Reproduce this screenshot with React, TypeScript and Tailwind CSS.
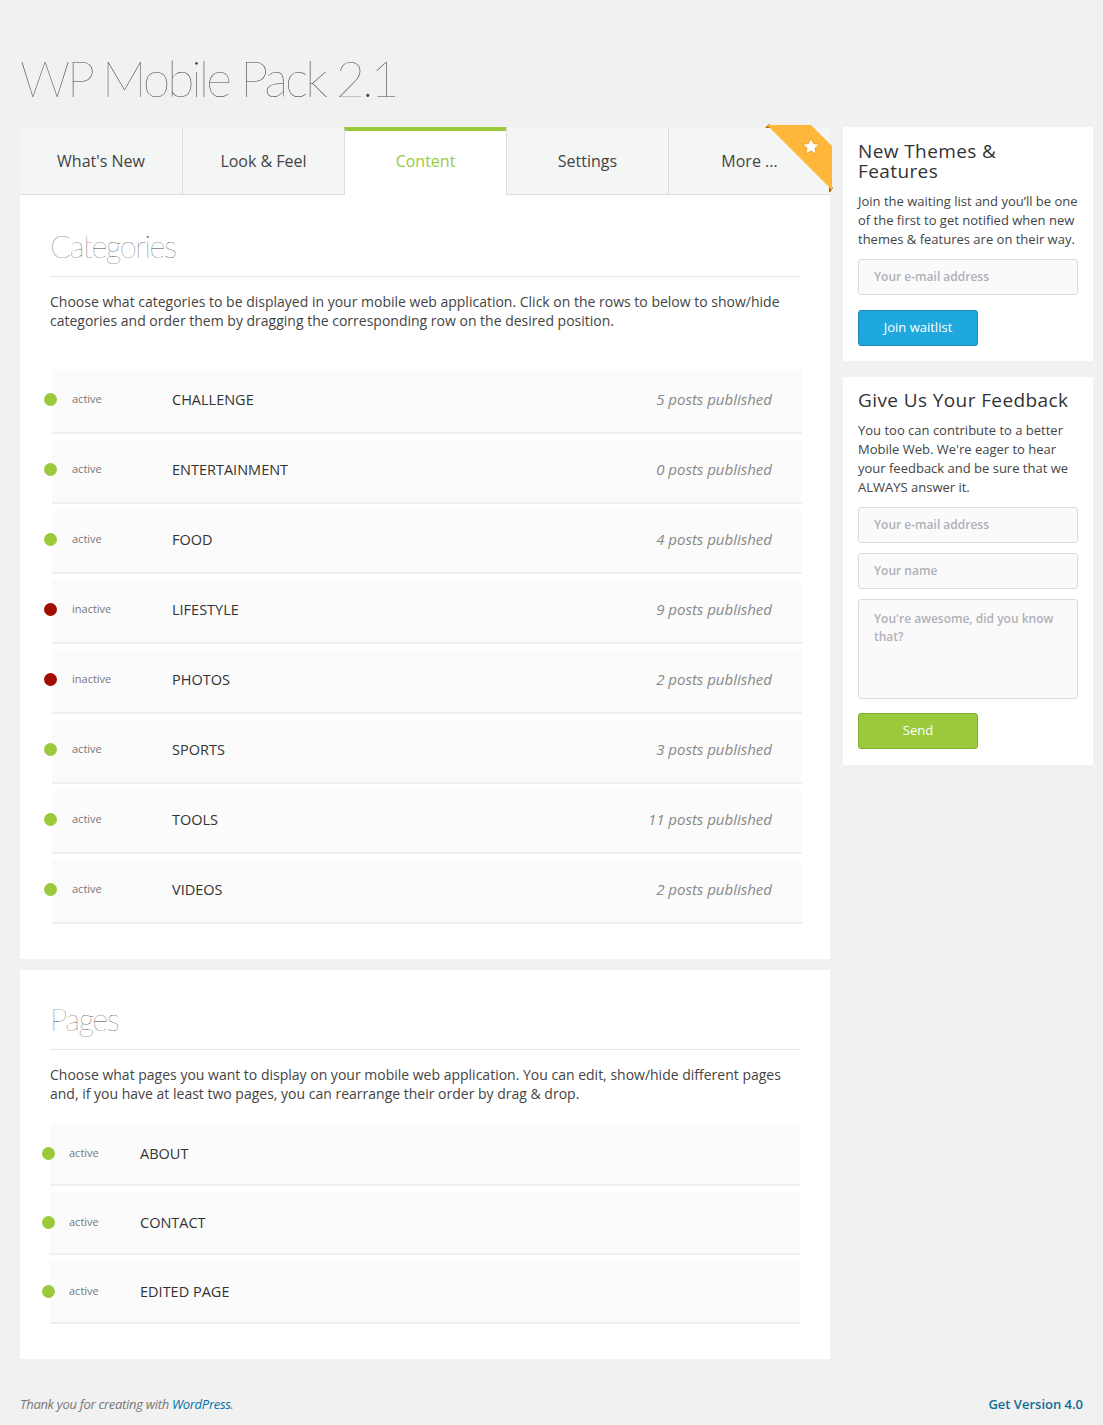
import React from 'react';

const categories = [
    { name: "CHALLENGE", active: true, posts: 5 },
    { name: "ENTERTAINMENT", active: true, posts: 0 },
    { name: "FOOD", active: true, posts: 4 },
    { name: "LIFESTYLE", active: false, posts: 9 },
    { name: "PHOTOS", active: false, posts: 2 },
    { name: "SPORTS", active: true, posts: 3 },
    { name: "TOOLS", active: true, posts: 11 },
    { name: "VIDEOS", active: true, posts: 2 },
];

const pages = ["ABOUT", "CONTACT", "EDITED PAGE"];

const tabs = ["What's New", "Look & Feel", "Content", "Settings", "More ..."];

function Dot({ active }: { active: boolean }) {
    return (
        <span className={`shrink-0 w-[13px] h-[13px] rounded-full -ml-[8px] ${active ? 'bg-[#9aca3c]' : 'bg-[#a30d00]'}`} />
    );
}

function Ribbon() {
    return (
        <svg className="absolute -top-[3px] -right-[3px]" width="68" height="68" viewBox="0 0 68 68">
            <polygon points="0,4 4,0 8,4" fill="#b56b00" />
            <polygon points="64,60 68,64 64,70" fill="#b56b00" />
            <polygon points="2,1 46,1 67,22 67,66" fill="#ffb73b" />
            <polygon
                points="46,14 48.6,19.6 54.6,20.2 50,24.2 51.3,30 46,27 40.7,30 42,24.2 37.4,20.2 43.4,19.6"
                fill="#ffffff"
                stroke="#f0a020"
                strokeWidth="1"
                strokeLinejoin="round"
            />
        </svg>
    );
}

export default function App() {
    return (
        <div className="min-h-[1425px] bg-[#f1f1f1] font-['Open_Sans',sans-serif] text-[#333]">
            <div className="px-[20px] pt-[48px]">
                <h1 className="font-['Lato',sans-serif] font-thin text-[50px] leading-[60px] tracking-[-3px] text-[#444] mb-[19px]">
                    WP Mobile Pack 2.1
                </h1>

                <div className="flex gap-[13px] items-start">
                    {/* Main column */}
                    <div className="w-[810px] shrink-0">
                        <div className="relative grid grid-cols-5 h-[68px]">
                            {tabs.map((tab, i) => (
                                <div
                                    key={tab}
                                    className={`flex items-center justify-center text-[16px] ${i > 0 ? 'border-l border-[#dddddd]' : ''} ${
                                        i === 2
                                            ? 'bg-white border-t-4 border-t-[#9aca3c] text-[#9aca3c] pb-[4px]'
                                            : 'bg-[#f4f5f5] border-b border-b-[#dddddd] text-[#444]'
                                    }`}
                                >
                                    {tab}
                                </div>
                            ))}
                            <Ribbon />
                        </div>

                        {/* Categories */}
                        <div className="bg-white pl-[30px] pr-[30px] pt-[33px] pb-[35px]">
                            <h2 className="font-['Lato',sans-serif] font-thin text-[31px] leading-[36px] tracking-[-1.5px] text-[#444] pb-[12px] border-b border-[#e5e5e5]">
                                Categories
                            </h2>
                            <p className="text-[14px] leading-[19px] text-[#444] mt-[15px] mb-[40px]">
                                Choose what categories to be displayed in your mobile web application. Click on the rows to below to show/hide categories and order them by dragging the corresponding row on the desired position.
                            </p>
                            <div className="ml-[2px] -mr-[2px] flex flex-col gap-[6px]">
                                {categories.map((c) => (
                                    <div key={c.name} className="flex items-center h-[64px] pb-[3px] bg-[#fbfbfb] border-b-2 border-[#efefef]">
                                        <Dot active={c.active} />
                                        <span className="w-[115px] pl-[15px] text-[11px] text-[#777]">{c.active ? 'active' : 'inactive'}</span>
                                        <span className="flex-1 text-[14.5px] text-[#333]">{c.name}</span>
                                        <span className="pr-[30px] text-[15px] italic text-[#888]">{c.posts} posts published</span>
                                    </div>
                                ))}
                            </div>
                        </div>

                        {/* Pages */}
                        <div className="bg-white mt-[11px] pl-[30px] pr-[30px] pt-[31px] pb-[35px]">
                            <h2 className="font-['Lato',sans-serif] font-thin text-[31px] leading-[36px] tracking-[-1.5px] text-[#444] pb-[12px] border-b border-[#e5e5e5]">
                                Pages
                            </h2>
                            <p className="text-[14px] leading-[19px] text-[#444] mt-[15px] mb-[20px]">
                                Choose what pages you want to display on your mobile web application. You can edit, show/hide different pages and, if you have at least two pages, you can rearrange their order by drag &amp; drop.
                            </p>
                            <div className="flex flex-col gap-[6px]">
                                {pages.map((p) => (
                                    <div key={p} className="flex items-center h-[63px] bg-[#fbfbfb] border-b-2 border-[#efefef]">
                                        <Dot active={true} />
                                        <span className="w-[85px] pl-[14px] text-[11px] text-[#777]">active</span>
                                        <span className="text-[14.5px] text-[#333]">{p}</span>
                                    </div>
                                ))}
                            </div>
                        </div>
                    </div>

                    {/* Sidebar */}
                    <div className="w-[250px] shrink-0 flex flex-col gap-[16px]">
                        <div className="bg-white px-[15px] pt-[14px] pb-[15px]">
                            <h3 className="text-[19px] leading-[20px] tracking-[0.4px] text-[#333] w-[160px]">New Themes &amp; Features</h3>
                            <p className="text-[13px] leading-[19px] text-[#444] mt-[11px] mb-[10px]">
                                Join the waiting list and you’ll be one of the first to get notified when new themes &amp; features are on their way.
                            </p>
                            <div className="h-[36px] rounded-[3px] border border-[#dddddd] bg-[#fafafa] flex items-center px-[15px] text-[12px] font-semibold text-[#b0b0b8]">
                                Your e-mail address
                            </div>
                            <button className="mt-[15px] w-[120px] h-[36px] rounded-[3px] bg-[#1fa8dd] border border-[#1889b6] text-white text-[13px]">
                                Join waitlist
                            </button>
                        </div>

                        <div className="bg-white px-[15px] pt-[11px] pb-[16px]">
                            <h3 className="text-[19px] leading-[24px] tracking-[0.4px] text-[#333] whitespace-nowrap">Give Us Your Feedback</h3>
                            <p className="text-[13px] leading-[19px] text-[#444] mt-[9px] mb-[10px]">
                                You too can contribute to a better Mobile Web. We're eager to hear your feedback and be sure that we ALWAYS answer it.
                            </p>
                            <div className="flex flex-col gap-[10px]">
                                <div className="h-[36px] rounded-[3px] border border-[#dddddd] bg-[#fafafa] flex items-center px-[15px] text-[12px] font-semibold text-[#b0b0b8]">
                                    Your e-mail address
                                </div>
                                <div className="h-[36px] rounded-[3px] border border-[#dddddd] bg-[#fafafa] flex items-center px-[15px] text-[12px] font-semibold text-[#b0b0b8]">
                                    Your name
                                </div>
                                <div className="h-[100px] rounded-[3px] border border-[#dddddd] bg-[#fafafa] px-[15px] pt-[10px] text-[12px] leading-[18px] font-semibold text-[#b0b0b8]">
                                    You're awesome, did you know that?
                                </div>
                            </div>
                            <button className="mt-[14px] w-[120px] h-[36px] rounded-[3px] bg-[#9aca3c] border border-[#84ad30] text-white text-[13px]">
                                Send
                            </button>
                        </div>
                    </div>
                </div>

                <div className="flex justify-between items-center mt-[36px] pb-[12px] text-[13px]">
                    <span className="italic text-[#777] tracking-[-0.3px]">
                        Thank you for creating with <span className="text-[#0073aa]">WordPress</span>.
                    </span>
                    <span className="text-[#0e6c94] font-semibold">Get Version 4.0</span>
                </div>
            </div>
        </div>
    );
}
